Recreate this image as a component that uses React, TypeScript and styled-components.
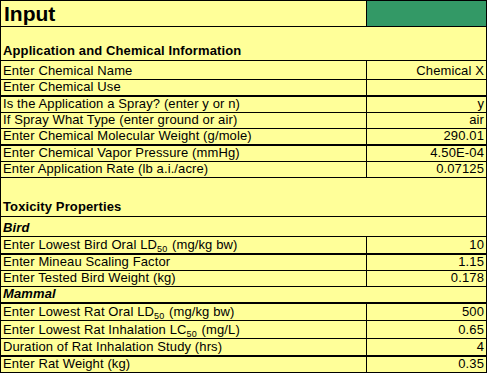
import styled, { createGlobalStyle } from "styled-components";

const GlobalStyle = createGlobalStyle`
  html, body {
    margin: 0;
    padding: 0;
    background: #ffffff;
  }
  body {
    font-family: "Liberation Sans", Arial, sans-serif;
    font-size: 13px;
    letter-spacing: 0.12px;
    color: #000000;
  }
`;

const Sheet = styled.div`
  width: 487px;
  box-sizing: border-box;
  border-top: 1px solid #000;
  border-left: 1px solid #000;
  border-right: 1px solid #000;
  background: #ffff99;
`;

const Row = styled.div<{ h: number; thick?: boolean }>`
  display: flex;
  height: ${(p) => p.h}px;
  border-bottom: ${(p) => (p.thick ? 2 : 1)}px solid #000;
`;

const Label = styled.div`
  width: 366px;
  flex-shrink: 0;
  border-right: 1px solid #000;
  display: flex;
  align-items: flex-end;
  padding: 0 0 1px 2px;
  box-sizing: border-box;
  white-space: pre;
  line-height: 14px;
`;

const Value = styled.div<{ green?: boolean }>`
  flex: 1;
  display: flex;
  align-items: flex-end;
  justify-content: flex-end;
  padding: 0 2px 1px 0;
  box-sizing: border-box;
  white-space: nowrap;
  line-height: 14px;
  background: ${(p) => (p.green ? "#339966" : "transparent")};
`;

const Title = styled.div`
  width: 366px;
  flex-shrink: 0;
  border-right: 1px solid #000;
  display: flex;
  align-items: center;
  padding-left: 3px;
  box-sizing: border-box;
  font-size: 21px;
  font-weight: bold;
  letter-spacing: 0;
`;

const Section = styled.div`
  flex: 1;
  display: flex;
  align-items: flex-end;
  padding: 0 0 2px 2px;
  font-weight: bold;
  line-height: 14px;
`;

const Group = styled(Section)`
  font-style: italic;
  padding-bottom: 1px;
`;

const Sub = styled.span`
  font-size: 9px;
  position: relative;
  top: 3px;
  line-height: 0;
  margin-right: 1px;
`;

type Item = { label: React.ReactNode; value?: string; h: number; thick?: boolean };

const chemical: Item[] = [
  { label: "Enter Chemical Name", value: "Chemical X", h: 18 },
  { label: "Enter Chemical Use", h: 15, thick: true },
  { label: "Is the Application a Spray? (enter y or n)", value: "y", h: 15 },
  { label: "If Spray What Type (enter ground or air)", value: "air", h: 15 },
  { label: "Enter Chemical Molecular Weight (g/mole)", value: "290.01", h: 15, thick: true },
  { label: "Enter Chemical Vapor Pressure (mmHg)", value: "4.50E-04", h: 15 },
  { label: "Enter Application Rate (lb a.i./acre)", value: "0.07125", h: 15 },
];

const bird: Item[] = [
  {
    label: (
      <span>
        Enter Lowest Bird Oral LD<Sub>50</Sub>{" "}(mg/kg bw)
      </span>
    ),
    value: "10",
    h: 16,
    thick: true,
  },
  { label: "Enter Mineau Scaling Factor", value: "1.15", h: 15 },
  { label: "Enter Tested Bird Weight (kg)", value: "0.178", h: 15 },
];

const mammal: Item[] = [
  {
    label: (
      <span>
        Enter Lowest Rat Oral LD<Sub>50</Sub>{" "}(mg/kg bw)
      </span>
    ),
    value: "500",
    h: 16,
  },
  {
    label: (
      <span>
        Enter Lowest Rat Inhalation LC<Sub>50</Sub>{" "}(mg/L)
      </span>
    ),
    value: "0.65",
    h: 17,
  },
  { label: "Duration of Rat Inhalation Study (hrs)", value: "4", h: 16, thick: true },
  { label: "Enter Rat Weight (kg)", value: "0.35", h: 15 },
];

function Rows({ items }: { items: Item[] }) {
  return (
    <>
      {items.map((it, i) => (
        <Row key={i} h={it.h} thick={it.thick}>
          <Label>{it.label}</Label>
          <Value>{it.value}</Value>
        </Row>
      ))}
    </>
  );
}

export default function App() {
  return (
    <>
      <GlobalStyle />
      <Sheet>
        <Row h={25}>
          <Title>Input</Title>
          <Value green />
        </Row>
        <Row h={33}>
          <Section>Application and Chemical Information</Section>
        </Row>
        <Rows items={chemical} />
        <Row h={38}>
          <Section>Toxicity Properties</Section>
        </Row>
        <Row h={19}>
          <Group>Bird</Group>
        </Row>
        <Rows items={bird} />
        <Row h={15} thick>
          <Group>Mammal</Group>
        </Row>
        <Rows items={mammal} />
      </Sheet>
    </>
  );
}
